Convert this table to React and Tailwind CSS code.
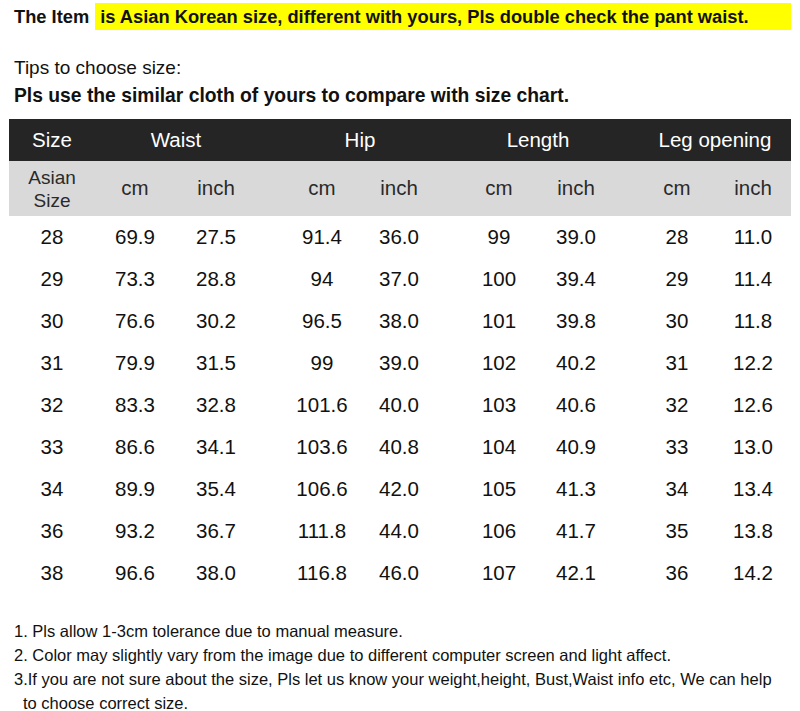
const COLS = [
  "w-[86px]",
  "w-[80px]",
  "w-[82px]",
  "w-[104px] pl-[26px]",
  "w-[76px]",
  "w-[100px] pl-[24px]",
  "w-[78px]",
  "w-[100px] pl-[24px]",
  "w-[76px]",
];

const ROWS = [
  ["28", "69.9", "27.5", "91.4", "36.0", "99", "39.0", "28", "11.0"],
  ["29", "73.3", "28.8", "94", "37.0", "100", "39.4", "29", "11.4"],
  ["30", "76.6", "30.2", "96.5", "38.0", "101", "39.8", "30", "11.8"],
  ["31", "79.9", "31.5", "99", "39.0", "102", "40.2", "31", "12.2"],
  ["32", "83.3", "32.8", "101.6", "40.0", "103", "40.6", "32", "12.6"],
  ["33", "86.6", "34.1", "103.6", "40.8", "104", "40.9", "33", "13.0"],
  ["34", "89.9", "35.4", "106.6", "42.0", "105", "41.3", "34", "13.4"],
  ["36", "93.2", "36.7", "111.8", "44.0", "106", "41.7", "35", "13.8"],
  ["38", "96.6", "38.0", "116.8", "46.0", "107", "42.1", "36", "14.2"],
];

const SUB = ["cm", "inch", "cm", "inch", "cm", "inch", "cm", "inch"];

export default function App() {
  return (
    <div className="h-[711px] w-[800px] overflow-hidden bg-white font-['Liberation_Sans',Arial,sans-serif] text-[#111]">
      <div className="flex h-[31px] items-center pt-[2px]">
        <span className="pl-[14px] pr-[6px] text-[18.3px] font-bold">The Item</span>
        <div className="flex h-[27px] w-[696px] items-center bg-[#ffff00] pl-[5px] text-[18.3px] font-bold">
          is Asian Korean size, different with yours, Pls double check the pant waist.
        </div>
      </div>

      <div className="mt-[24px] pl-[14px] text-[19px] leading-[26px]">Tips to choose size:</div>
      <div className="pl-[14px] text-[19.3px] font-bold leading-[30px]">
        Pls use the similar cloth of yours to compare with size chart.
      </div>

      <div className="ml-[9px] mt-[8px] w-[782px] text-[20.5px]">
        <div className="flex h-[42px] items-center bg-[#252525] text-white">
          <div className="w-[86px] text-center">Size</div>
          <div className="w-[162px] text-center">Waist</div>
          <div className="w-[180px] pl-[26px] text-center">Hip</div>
          <div className="w-[178px] pl-[24px] text-center">Length</div>
          <div className="w-[176px] pl-[24px] text-center">Leg opening</div>
        </div>
        <div className="flex h-[55px] items-center bg-[#d9d9d9] text-[#2a2a2a]">
          <div className="w-[86px] text-center text-[19px] leading-[23px]">
            Asian
            <br />
            Size
          </div>
          {SUB.map((s, i) => (
            <div key={i} className={COLS[i + 1] + " text-center"}>
              {s}
            </div>
          ))}
        </div>
        {ROWS.map((row) => (
          <div key={row[0]} className="flex h-[42px] items-center pt-[1px]">
            {row.map((v, i) => (
              <div key={i} className={COLS[i] + " text-center"}>
                {v}
              </div>
            ))}
          </div>
        ))}
      </div>

      <div className="mt-[25px] pl-[14px] text-[16.5px] leading-[24px]">
        <div>1. Pls allow 1-3cm tolerance due to manual measure.</div>
        <div>2. Color may slightly vary from the image due to different computer screen and light affect.</div>
        <div>
          3.If you are not sure about the size, Pls let us know your weight,height, Bust,Waist info etc, We can help
        </div>
        <div className="pl-[9px]">to choose correct size.</div>
      </div>
    </div>
  );
}
